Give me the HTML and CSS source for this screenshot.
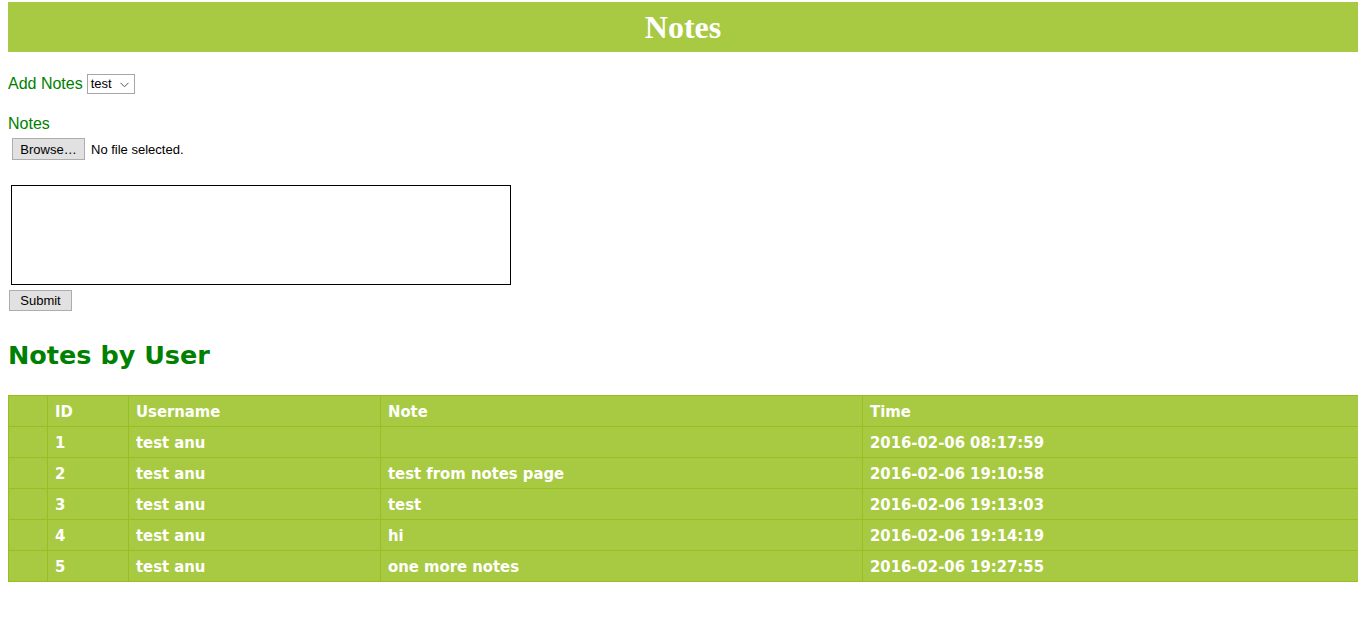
FILE: index.html
```html
<!DOCTYPE html>
<html>
<head>
<meta charset="utf-8">
<link rel="stylesheet" href="styles.css">
</head>
<body>
<header class="topbar"><h1 class="title">Notes</h1></header>
<form class="note-form">
  <div class="row-add">
    <label class="lbl">Add Notes</label>
    <div class="select"><span class="select-val">test</span><svg class="chev" width="9" height="6" viewBox="0 0 9 6"><path d="M0.5 0.8 L4.5 4.8 L8.5 0.8" fill="none" stroke="#555" stroke-width="1"/></svg></div>
  </div>
  <div class="row-notes">
    <label class="lbl">Notes</label>
    <div class="file-row"><span class="btn browse">Browse…</span><span class="file-text">No file selected.</span></div>
  </div>
  <div class="area-wrap"><div class="textarea"></div></div>
  <span class="btn submit">Submit</span>
</form>
<h2 class="section-title">Notes by User</h2>
<table class="notes-table">
  <colgroup><col class="c0"><col class="c1"><col class="c2"><col class="c3"><col class="c4"></colgroup>
  <thead>
    <tr><th></th><th>ID</th><th>Username</th><th>Note</th><th>Time</th></tr>
  </thead>
  <tbody>
    <tr><td></td><td>1</td><td>test anu</td><td></td><td>2016-02-06 08:17:59</td></tr>
    <tr><td></td><td>2</td><td>test anu</td><td>test from notes page</td><td>2016-02-06 19:10:58</td></tr>
    <tr><td></td><td>3</td><td>test anu</td><td>test</td><td>2016-02-06 19:13:03</td></tr>
    <tr><td></td><td>4</td><td>test anu</td><td>hi</td><td>2016-02-06 19:14:19</td></tr>
    <tr><td></td><td>5</td><td>test anu</td><td>one more notes</td><td>2016-02-06 19:27:55</td></tr>
  </tbody>
</table>
</body>
</html>
```
FILE: styles.css
```css
html, body { background: #fff; }
body { margin: 0 8px; font-family: "Liberation Sans", Arial, sans-serif; }
.topbar { margin-top: 2px; height: 50px; background: #a8ca42; display: flex; align-items: center; justify-content: center; }
.title { margin: 0; font-family: "Liberation Serif", "Times New Roman", serif; font-weight: bold; font-size: 32px; color: #fff; line-height: 50px; }
.note-form { display: flex; flex-direction: column; align-items: flex-start; }
.lbl { color: #008000; font-size: 16px; line-height: 18px; }
.row-add { margin-top: 22px; display: flex; align-items: center; height: 20px; }
.select { margin-left: 4px; border: 1px solid #a6a6a6; display: flex; align-items: center; justify-content: space-between; padding: 0 5px 0 3px; box-sizing: border-box; width: 48px; height: 20px; font-size: 13px; color: #000; }
.select-val { line-height: 18px; }
.chev { margin-top: 1px; }
.row-notes { margin-top: 21px; display: flex; flex-direction: column; }
.file-row { display: flex; align-items: center; margin-top: 5px; margin-left: 4px; }
.btn { display: inline-flex; align-items: center; justify-content: center; background: #e1e1e1; border: 1px solid #adadad; font-size: 13px; color: #000; box-sizing: border-box; }
.browse { width: 73px; height: 22px; }
.file-text { font-size: 13px; margin-left: 6px; color: #000; }
.area-wrap { margin-top: 25px; margin-left: 3px; }
.textarea { width: 500px; height: 100px; border: 1px solid #000; box-sizing: border-box; background: #fff; }
.submit { margin-top: 5px; margin-left: 1px; width: 63px; height: 21px; }
.section-title { margin: 29px 0 0; font-family: "DejaVu Sans", Verdana, sans-serif; font-weight: bold; font-size: 25.5px; line-height: 30px; color: #008000; }
.notes-table { margin-top: 25px; width: 1350px; border-collapse: collapse; table-layout: fixed; font-family: "DejaVu Sans Condensed", "Trebuchet MS", sans-serif; font-weight: bold; color: #fff; font-size: 16.5px; }
.c0 { width: 39px; } .c1 { width: 81px; } .c2 { width: 252px; } .c3 { width: 482px; } .c4 { width: 496px; }
.notes-table th, .notes-table td { background: #a8ca42; border: 1px solid #98bf21; height: 31px; box-sizing: border-box; padding: 0 7px; text-align: left; vertical-align: middle; }
.notes-table th { font-weight: bold; }
```
